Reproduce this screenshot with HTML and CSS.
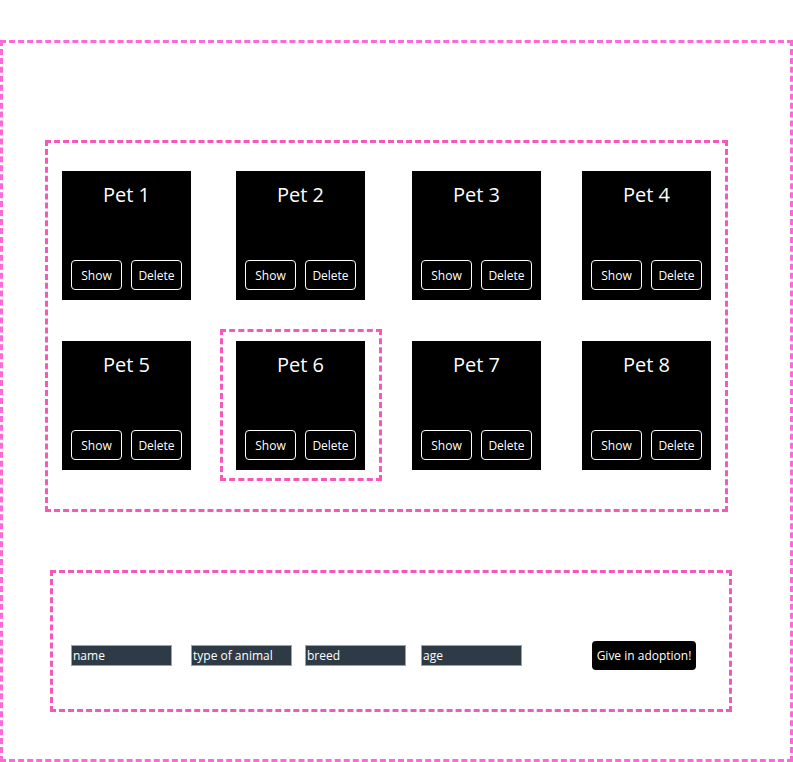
FILE: index.html
```html
<!DOCTYPE html>
<html lang="en">
<head>
  <meta charset="UTF-8" />
  <meta name="viewport" content="width=device-width, initial-scale=1.0"/>
  <title>Pet Adoption</title>
  <link rel="stylesheet" href="styles.css">
</head>
<body>

  <div class="app">
    <div class="pet-list">
      <div class="pet">
        <h3>Pet 1</h3>
        <div class="pet-actions"><button>Show</button><button>Delete</button></div>
      </div>
      <div class="pet">
        <h3>Pet 2</h3>
        <div class="pet-actions"><button>Show</button><button>Delete</button></div>
      </div>
      <div class="pet">
        <h3>Pet 3</h3>
        <div class="pet-actions"><button>Show</button><button>Delete</button></div>
      </div>
      <div class="pet">
        <h3>Pet 4</h3>
        <div class="pet-actions"><button>Show</button><button>Delete</button></div>
      </div>
      <div class="pet">
        <h3>Pet 5</h3>
        <div class="pet-actions"><button>Show</button><button>Delete</button></div>
      </div>
      <div class="pet selected">
        <h3>Pet 6</h3>
        <div class="pet-actions"><button>Show</button><button>Delete</button></div>
      </div>
      <div class="pet">
        <h3>Pet 7</h3>
        <div class="pet-actions"><button>Show</button><button>Delete</button></div>
      </div>
      <div class="pet">
        <h3>Pet 8</h3>
        <div class="pet-actions"><button>Show</button><button>Delete</button></div>
      </div>
    </div>

    <form class="adopt-form" onsubmit="return false">
      <input type="text" class="f-name" placeholder="name">
      <input type="text" class="f-type" placeholder="type of animal">
      <input type="text" class="f-breed" placeholder="breed">
      <input type="text" class="f-age" placeholder="age">
      <button type="submit">Give in adoption!</button>
    </form>
  </div>

</body>
</html>
```

FILE: styles.css
```css
* { box-sizing: border-box; }
body {
  margin: 0;
  font-family: "Comic Sans MS", "Open Sans", sans-serif;
  background: #fff;
  color: #000;
}

.app {
  margin-top: 40px;
  height: 722px;
  border: 3px dashed #ff68d8;
  padding: 97px 0 0 42px;
}

.pet-list {
  width: 683px;
  height: 372px;
  border: 3px dashed #f657bc;
  padding: 28px 0 0 14px;
  display: grid;
  grid-template-columns: 174px 176px 170px 129px;
  grid-auto-rows: 129px;
  row-gap: 41px;
}

.pet {
  position: relative;
  width: 129px;
  height: 129px;
  background: #000;
  color: #fff;
  display: flex;
  flex-direction: column;
  justify-content: space-between;
  padding: 0 9px 10px;
}

.pet h3 {
  margin: 11px 0 0;
  font-size: 20px;
  font-weight: normal;
  text-align: center;
  line-height: 26px;
}

.pet-actions {
  display: flex;
  justify-content: space-between;
}

.pet-actions button {
  width: 51px;
  height: 30px;
  padding: 0;
  background: #000;
  color: #fff;
  border: 1px solid #fff;
  border-radius: 4px;
  font-family: inherit;
  font-size: 12px;
}

.pet.selected::after {
  content: "";
  position: absolute;
  top: -12px;
  left: -16px;
  right: -17px;
  bottom: -11px;
  border: 3px dashed #f657bc;
}

.adopt-form {
  margin: 58px 0 0 5px;
  width: 682px;
  height: 142px;
  border: 3px dashed #f657bc;
  padding: 72px 0 0 18px;
  display: flex;
}

.adopt-form input {
  width: 101px;
  height: 21px;
  padding: 0 1px;
  background: #2e3b46;
  color: #fff;
  border: 1px solid #8ea6bd;
  border-radius: 0;
  font-family: inherit;
  font-size: 12px;
}

.adopt-form input::placeholder { color: #fff; opacity: 1; }

.f-type { margin-left: 19px; }
.f-breed { margin-left: 13px; }
.f-age { margin-left: 15px; }

.adopt-form button {
  margin-left: 70px;
  margin-top: -4px;
  width: 104px;
  height: 29px;
  padding: 0;
  background: #000;
  color: #fff;
  border: none;
  border-radius: 4px;
  font-family: inherit;
  font-size: 12px;
}
```
